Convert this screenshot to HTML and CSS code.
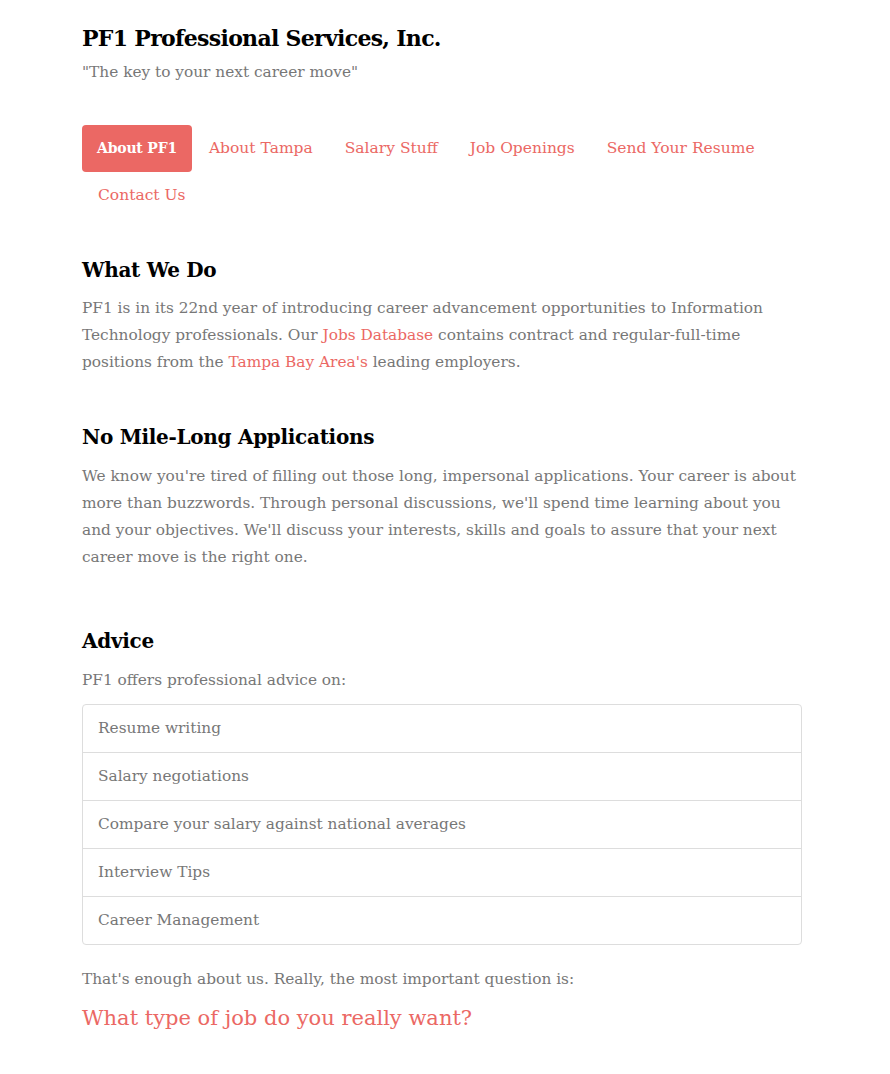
FILE: index.html
```html
<!DOCTYPE html>
<html>
<head>
<meta charset="utf-8">
<link rel="stylesheet" href="styles.css">
</head>
<body>
<div class="container">
  <header class="masthead">
    <h1 class="site-title">PF1 Professional Services, Inc.</h1>
    <p class="tagline">"The key to your next career move"</p>
  </header>
  <nav class="nav-pills">
    <a class="pill active" href="#">About PF1</a>
    <a class="pill" href="#">About Tampa</a>
    <a class="pill" href="#">Salary Stuff</a>
    <a class="pill" href="#">Job Openings</a>
    <a class="pill" href="#">Send Your Resume</a>
    <a class="pill" href="#">Contact Us</a>
  </nav>

  <section class="sec sec-1">
    <h2>What We Do</h2>
    <p>PF1 is in its 22nd year of introducing career advancement opportunities to Information Technology professionals. Our <a href="#">Jobs Database</a> contains contract and regular-full-time positions from the <a href="#">Tampa Bay Area's</a> leading employers.</p>
  </section>

  <section class="sec sec-2">
    <h2>No Mile-Long Applications</h2>
    <p>We know you're tired of filling out those long, impersonal applications. Your career is about more than buzzwords. Through personal discussions, we'll spend time learning about you and your objectives. We'll discuss your interests, skills and goals to assure that your next career move is the right one.</p>
  </section>

  <section class="sec sec-3">
    <h2>Advice</h2>
    <p class="lead-in">PF1 offers professional advice on:</p>
    <ul class="list-group">
      <li>Resume writing</li>
      <li>Salary negotiations</li>
      <li>Compare your salary against national averages</li>
      <li>Interview Tips</li>
      <li>Career Management</li>
    </ul>
    <p class="closing">That's enough about us. Really, the most important question is:</p>
    <p class="question">What type of job do you really want?</p>
  </section>
</div>
</body>
</html>
```

FILE: styles.css
```css
html, body {
  margin: 0;
  padding: 0;
  background: #fff;
}
body {
  font-family: "DejaVu Serif", "Liberation Serif", serif;
  font-size: 15.35px;
  line-height: 27px;
  color: #777;
}
.container {
  width: 720px;
  margin-left: 82px;
}
a {
  color: #eb6864;
  text-decoration: none;
}
.masthead {
  padding-top: 23px;
}
.site-title {
  margin: 0;
  font-family: "DejaVu Serif", serif;
  font-weight: bold;
  font-size: 22px;
  line-height: 30px;
  color: #000;
  letter-spacing: -0.7px;
}
.tagline {
  margin: 6px 0 0;
}
.nav-pills {
  display: flex;
  flex-wrap: wrap;
  margin-top: 39px;
}
.pill {
  display: block;
  padding: 10px 15px;
  border-radius: 4px;
  font-size: 15.5px;
  line-height: 27px;
  margin-right: 2px;
}
.pill:last-child {
  margin-left: 1px;
}
.pill.active {
  background: #eb6864;
  color: #fff;
  font-weight: bold;
  font-size: 14px;
  letter-spacing: -0.2px;
}
h2 {
  margin: 0 0 12px;
  font-family: "DejaVu Serif", serif;
  font-weight: bold;
  font-size: 20px;
  line-height: 26px;
  color: #000;
  letter-spacing: -0.3px;
}
p {
  margin: 0;
}
.sec-1 { margin-top: 38px; }
.sec-2 { margin-top: 48px; }
.sec-2 h2 { margin-bottom: 13px; }
.sec-3 { margin-top: 57px; }
.sec-3 h2 { margin-bottom: 13px; }
.lead-in { margin-bottom: 10px; }
.list-group {
  list-style: none;
  margin: 0;
  padding: 0;
  border: 1px solid #ddd;
  border-radius: 4px;
}
.list-group li {
  padding: 10px 15px;
  line-height: 27px;
  border-top: 1px solid #ddd;
}
.list-group li:first-child {
  border-top: none;
}
.closing {
  margin-top: 21px;
}
.question {
  margin-top: 10px;
  font-size: 21px;
  line-height: 30px;
  color: #eb6864;
}
```
